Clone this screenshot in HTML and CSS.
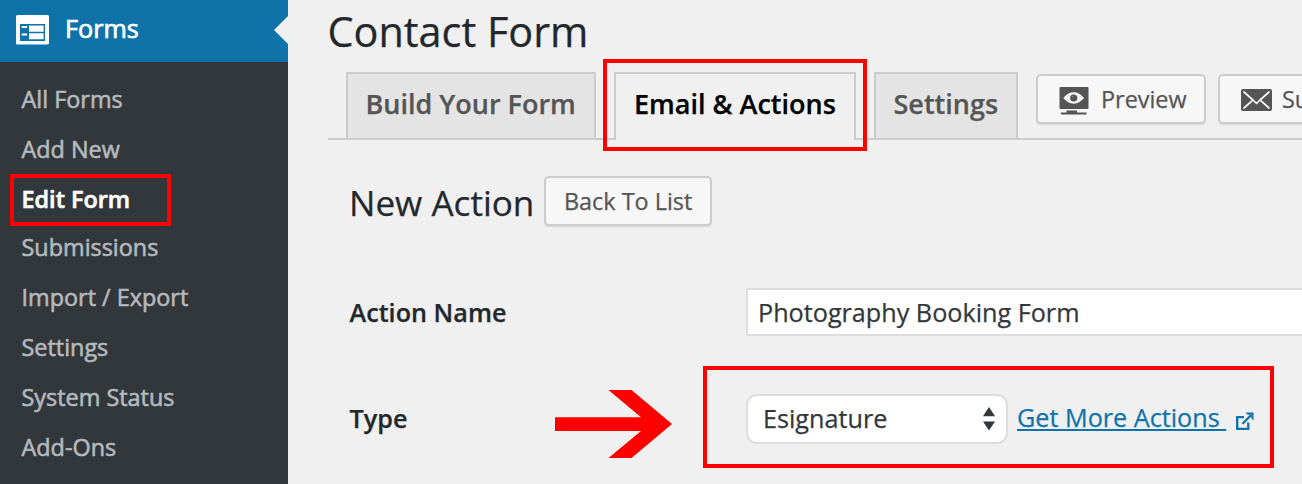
FILE: index.html
```html
<!DOCTYPE html>
<html lang="en">
<head>
<meta charset="utf-8">
<title>Contact Form</title>
<link rel="stylesheet" href="styles.css">
</head>
<body>
<div class="app">
  <nav class="sidebar">
    <div class="menu-head">
      <svg class="menu-icon" width="33" height="30" viewBox="0 0 33 30"><path fill="#fff" fill-rule="evenodd" d="M1.500 0h30a1.500 1.500 0 0 1 1.500 1.500v26.500a1.500 1.500 0 0 1-1.500 1.500h-30a1.500 1.500 0 0 1-1.500-1.500v-26.500a1.500 1.500 0 0 1 1.500-1.500zM4 9v17h25V9z"/><path fill="#fff" d="M5.700 11h5.400v2H5.700zM5.700 18.500h5.400v2H5.700zM13 10.500h14.600v6.200H13zM13 18.300h14.600v6H13z"/></svg>
      <span class="menu-title">Forms</span>
      <span class="menu-notch"></span>
    </div>
    <ul class="submenu">
      <li>All Forms</li>
      <li>Add New</li>
      <li class="current">Edit Form<span class="mark mark-edit"></span></li>
      <li>Submissions</li>
      <li>Import / Export</li>
      <li>Settings</li>
      <li>System Status</li>
      <li>Add-Ons</li>
    </ul>
  </nav>
  <main class="content">
    <h1 class="page-title">Contact Form</h1>
    <div class="tabs">
      <span class="tab tab-build">Build Your Form</span>
      <span class="tab tab-email active">Email &amp; Actions<span class="mark mark-tab"></span></span>
      <span class="tab tab-settings">Settings</span>
      <span class="button button-preview">
        <svg width="30" height="28" viewBox="0 0 30 28"><path fill="#555" fill-rule="evenodd" d="M1.500 0h27a1 1 0 0 1 1 1v20a1 1 0 0 1-1 1h-27a1 1 0 0 1-1-1V1a1 1 0 0 1 1-1zM4.300 11q4.500-5.700 10.400-5.700t10.300 5.700q-4.500 5.700-10.300 5.700T4.300 11z"/><circle cx="14.700" cy="11" r="3.600" fill="#555"/><circle cx="13.600" cy="9.600" r=".7" fill="#999"/><path fill="#555" d="M7.500 23.400h10.500v2.200H27.500v1.800H2v-1.800h5.500z"/></svg>
        <span>Preview</span>
      </span>
      <span class="button button-mail">
        <svg width="31" height="22" viewBox="0 0 31 22"><rect width="31" height="22" rx="2" fill="#555"/><path fill="none" stroke="#f7f7f7" stroke-width="1.700" stroke-linecap="round" stroke-linejoin="round" d="M3 3l9.500 8.500 3 3 3-3L28 3M3 19l8.800-7.800M28 19l-8.800-7.800"/></svg>
        <span>Su</span>
      </span>
    </div>
    <section class="panel">
      <div class="panel-head">
        <h2 class="panel-title">New Action</h2>
        <span class="button button-back">Back To List</span>
      </div>
      <div class="row row-name">
        <label class="label">Action Name</label>
        <div class="input">Photography Booking Form</div>
      </div>
      <div class="row row-type">
        <label class="label">Type</label>
        <div class="select"><span>Esignature</span>
          <svg width="12" height="24" viewBox="0 0 12 24"><path fill="#32373c" d="M6 0l6 9.300H0zM0 14.500h12L6 23.500z"/></svg>
        </div>
        <a class="link">Get More Actions&nbsp;</a>
        <svg class="external" width="19" height="19" viewBox="0 0 19 19"><path fill="none" stroke="#0f73aa" stroke-width="2.300" d="M9 5.200H2.200V16.800H13.300V10.500M7.500 11.700l8.500-8.500"/><path fill="#0f73aa" d="M10.500 0.500h8v8l-2.200-2.200V2.700h-3.600z"/></svg>
        <span class="mark mark-type"></span>
        <svg class="arrow" width="118" height="70" viewBox="0 0 118 70"><path fill="#f00" d="M0 27.200h86L53.500 0h23L117 34 76.500 68h-23L86 41H0z"/></svg>
      </div>
    </section>
  </main>
</div>
</body>
</html>
```
FILE: styles.css
```css
* { box-sizing: border-box; }
body {
  margin: 0;
  background: #f0f0f0;
  color: #32373c;
  font-family: "Open Sans", sans-serif;
  font-size: 25.2px;
  -webkit-text-stroke: .25px;
}
.app { display: flex; width: 1302px; height: 484px; overflow: hidden; }

.sidebar {
  flex: none;
  width: 288px;
  background: #32373c;
}
.menu-head {
  position: relative;
  display: flex;
  align-items: center;
  gap: 16px;
  height: 62px;
  padding: 0 0 2px 16px;
  background: #0f73aa;
  color: #fff;
}
.menu-title { line-height: 54px; padding-bottom: 5px; -webkit-text-stroke: .7px; }
.menu-notch {
  position: absolute;
  right: 0;
  top: 16px;
  border: 14px solid transparent;
  border-left: 0;
  border-right-color: #f0f0f0;
}
.submenu {
  margin: 0;
  padding: 12px 0 0 21.500px;
  list-style: none;
  color: #b4b9be;
  font-size: 23.4px;
  -webkit-text-stroke: .6px;
}
.submenu li { height: 50px; line-height: 50px; }
.submenu .current { position: relative; height: 48px; color: #fff; font-weight: 600; }

.mark { position: absolute; border: 4px solid #f00; }
.mark-edit { left: -11.500px; top: 0; width: 161px; height: 52px; }
.mark-tab { left: -13px; top: -15px; width: 264px; height: 92px; }
.mark-type { left: 353px; top: -28px; width: 571px; height: 102px; }
.arrow { position: absolute; left: 205px; top: -4px; }

.content { flex: 1; min-width: 0; padding-left: 40px; }
.page-title {
  margin: 0 0 10px;
  text-indent: -.5px;
  line-height: 62px;
  font-size: 41.4px;
  font-weight: 400;
  color: #23282d;
}
.tabs {
  display: flex;
  height: 68px;
  padding-left: 18px;
  border-bottom: 2px solid #ccc;
}
.tab {
  flex: none;
  height: 66px;
  margin-right: 18px;
  padding-left: 17.500px;
  border: 2px solid #ccc;
  border-bottom: 0;
  background: #e4e4e4;
  color: #555;
  font-size: 27px;
  font-weight: 600;
  line-height: 60px;
  white-space: nowrap;
}
.tab.active { position: relative; height: 68px; padding-left: 18px; background: #f0f0f0; color: #000; }
.tab-build { width: 250px; }
.tab-email { width: 242px; }
.tab-settings { width: 144px; }

.button {
  flex: none;
  display: flex;
  border: 2px solid #ccc;
  border-radius: 5px;
  background: #f7f7f7;
  box-shadow: 0 1.500px 0 #ddd;
  color: #555;
  font-size: 23.4px;
  line-height: 46px;
  white-space: nowrap;
}
.button-preview { width: 170px; height: 50px; margin: 2px 12px 0 0; padding-left: 21px; gap: 12px; }
.button-preview svg { margin-top: 11px; }
.button-mail { width: 170px; height: 50px; margin-top: 2px; padding-left: 21px; gap: 10px; }
.button-mail svg { margin-top: 13px; }
.button-back { width: 168px; height: 50px; padding-left: 18px; }

.panel { padding: 36px 0 0 21.500px; }
.panel-head { display: flex; height: 50px; }
.panel-title {
  width: 194.500px;
  margin: 0;
  text-indent: -.5px;
  color: #23282d;
  font-size: 35.1px;
  font-weight: 400;
  line-height: 52px;
}
.row { display: flex; }
.row-name { height: 48px; margin-top: 62px; }
.row-type { position: relative; height: 50px; margin-top: 58px; }
.label { flex: none; width: 396.500px; color: #23282d; font-weight: 600; font-size: 25.2px; line-height: 48px; }
.input {
  flex: 1;
  border: 2px solid #ddd;
  border-right: 0;
  background: #fff;
  padding-left: 10px;
  line-height: 45px;
}
.select {
  flex: none;
  display: flex;
  justify-content: space-between;
  width: 262px;
  height: 50px;
  padding: 0 11px 0 15px;
  border: 2px solid #ddd;
  border-radius: 11px;
  background: #fff;
  line-height: 44px;
}
.select svg { margin-top: 11px; }
.link {
  flex: none;
  height: 36px;
  margin-left: 9px;
  color: #0f73aa;
  line-height: 46px;
  text-decoration: underline;
  text-decoration-thickness: 2px;
  text-underline-offset: 2px;
}
.external { margin: 18px 0 0 9px; }
```
